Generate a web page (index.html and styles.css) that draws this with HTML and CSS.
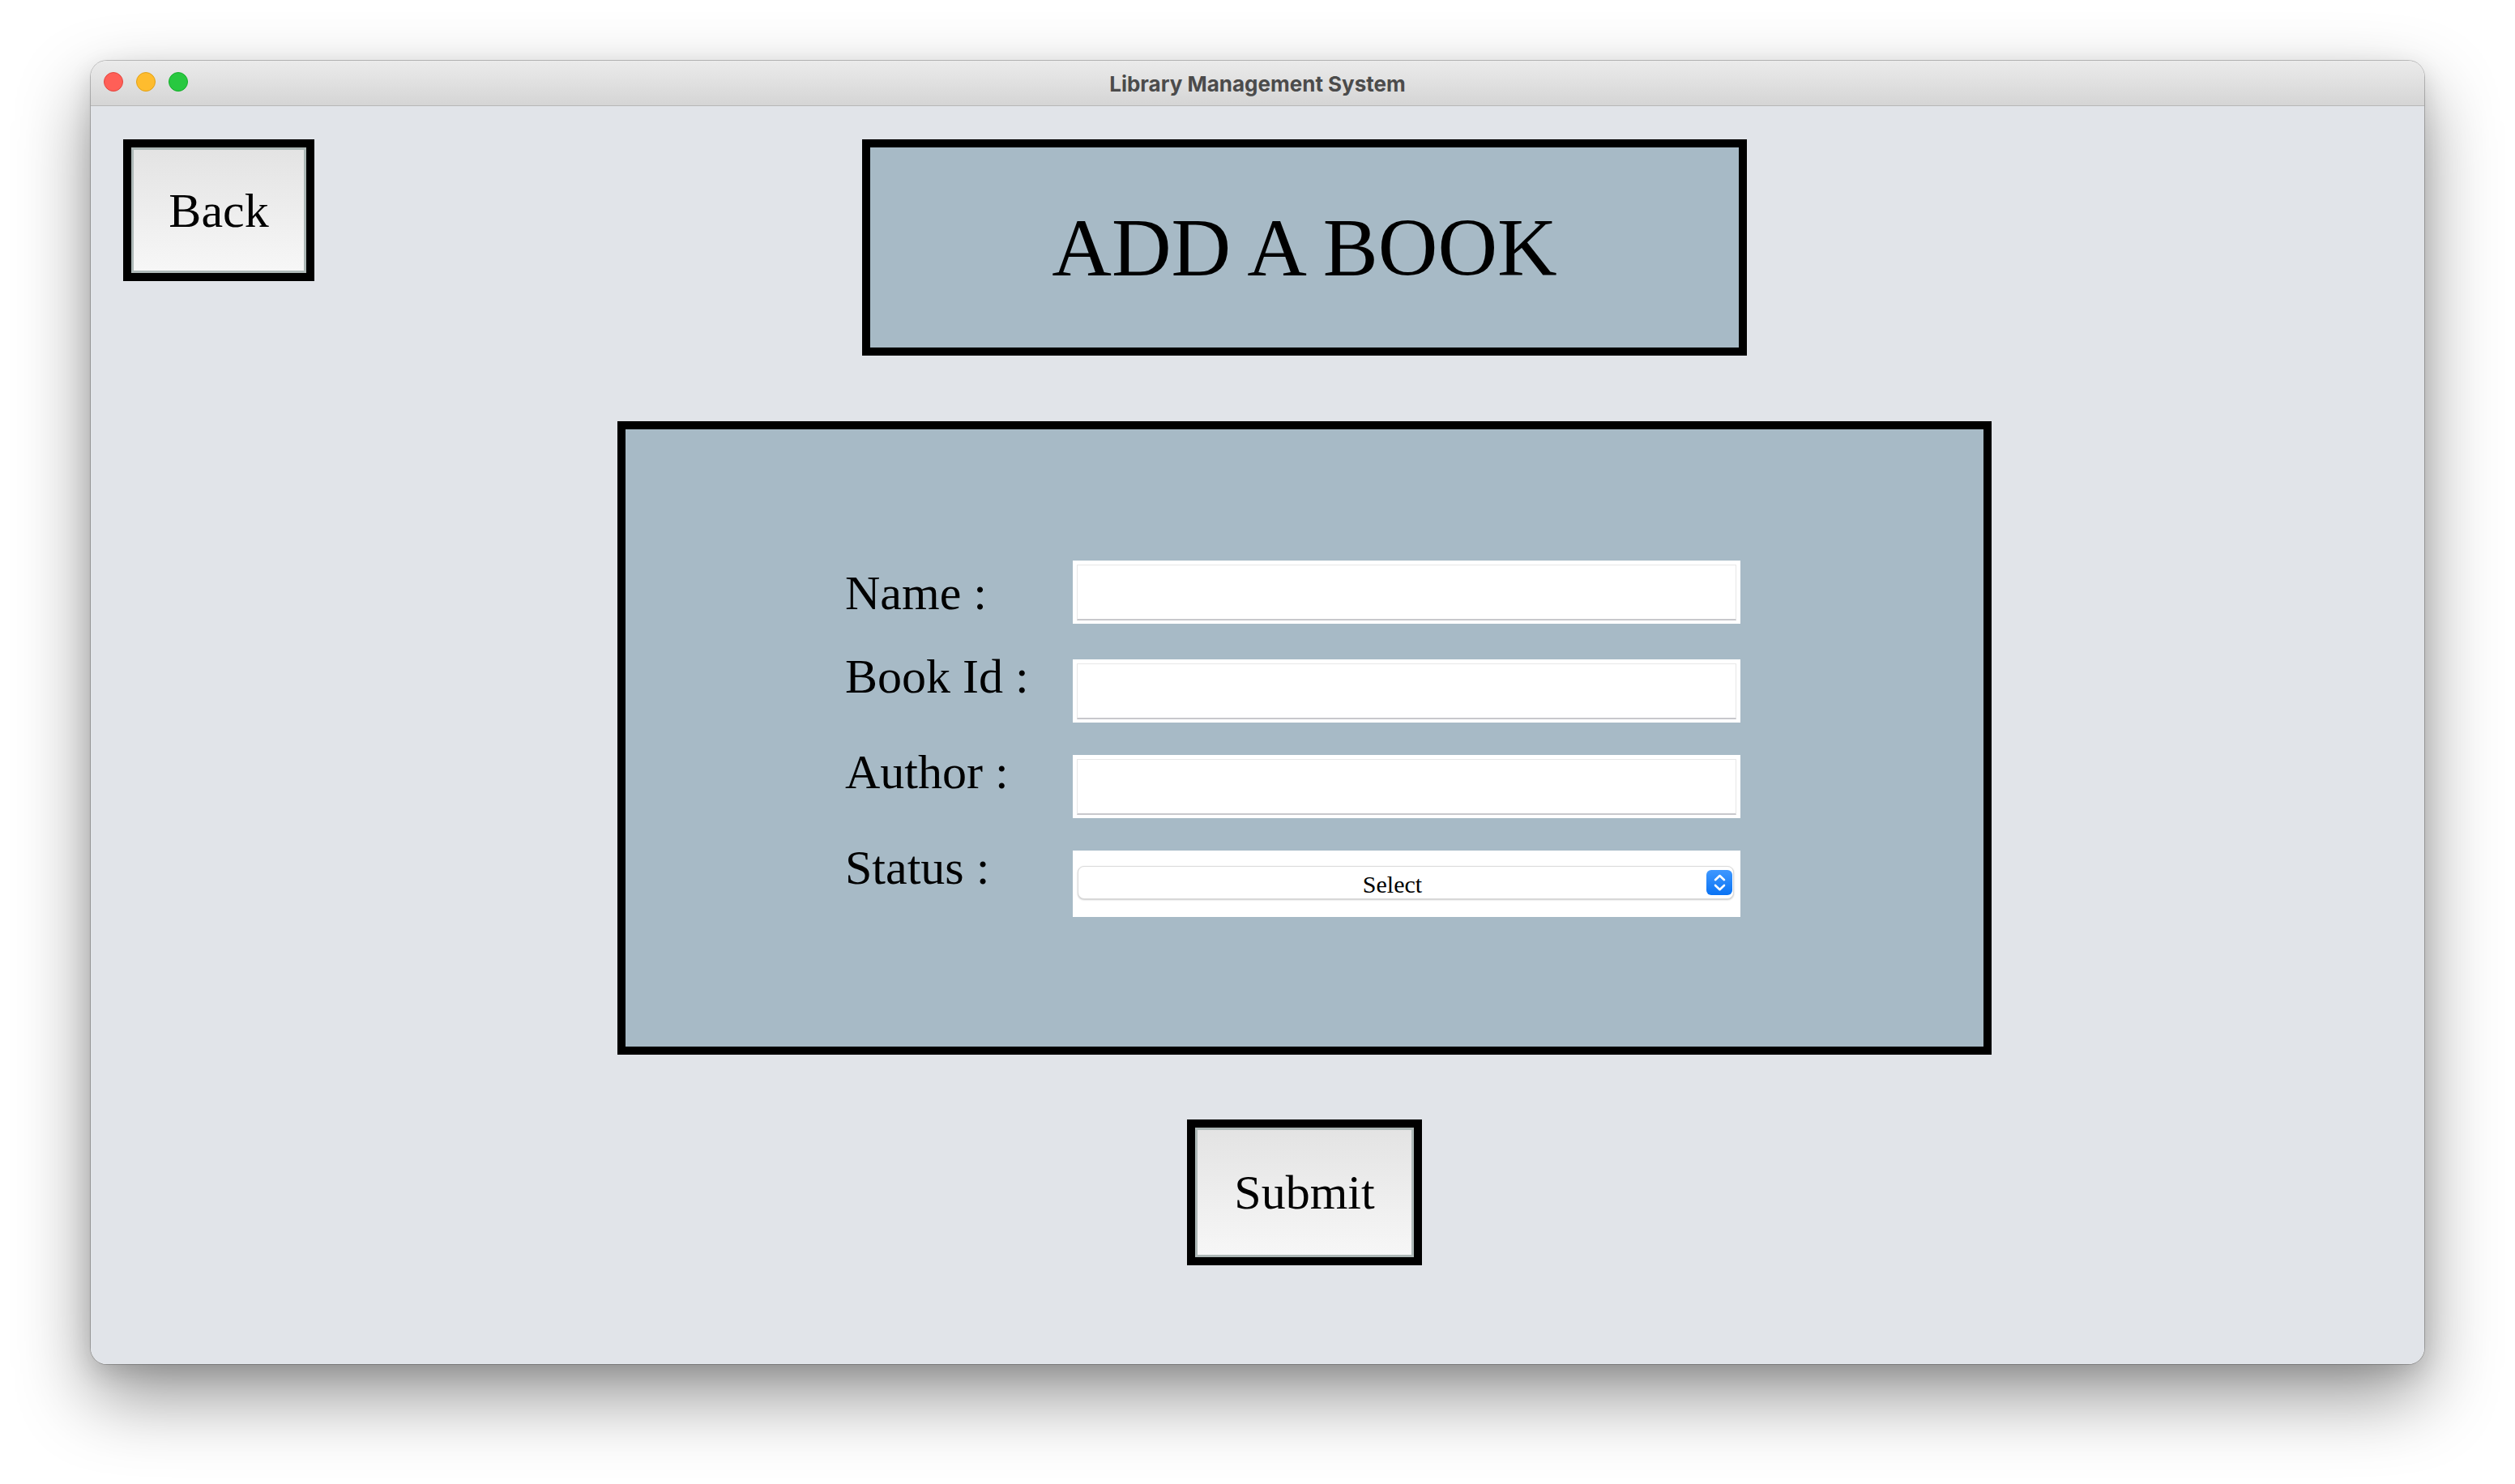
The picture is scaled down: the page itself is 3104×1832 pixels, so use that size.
FILE: index.html
```html
<!DOCTYPE html>
<html lang="en">
<head>
<meta charset="utf-8">
<title>Library Management System</title>
<link rel="stylesheet" href="styles.css">
</head>
<body>
<div class="window">
  <div class="titlebar">
    <div class="lights">
      <span class="light light-red"></span>
      <span class="light light-yellow"></span>
      <span class="light light-green"></span>
    </div>
    <div class="title">Library Management System</div>
    <div class="titlebar-spacer"></div>
  </div>
  <div class="content">
    <div class="top-row">
      <button class="btn btn-back" type="button">Back</button>
      <div class="heading">ADD A BOOK</div>
    </div>
    <div class="main">
      <div class="panel">
        <div class="form">
          <div class="label label-first">Name :</div>
          <div class="field"><div class="field-inner"></div></div>
          <div class="label">Book Id :</div>
          <div class="field"><div class="field-inner"></div></div>
          <div class="label">Author :</div>
          <div class="field"><div class="field-inner"></div></div>
          <div class="label">Status :</div>
          <div class="field field-select">
            <div class="select">
              <span class="select-text">Select</span>
              <span class="select-arrow">
                <svg width="32" height="31" viewBox="0 0 32 31" aria-hidden="true">
                  <path d="M11 12.2 L16.5 7 L22 12.2" />
                  <path d="M11 19 L16.5 24.2 L22 19" />
                </svg>
              </span>
            </div>
          </div>
        </div>
      </div>
      <button class="btn btn-submit" type="button">Submit</button>
    </div>
  </div>
</div>
</body>
</html>
```

FILE: styles.css
```css
html, body {
  margin: 0;
  padding: 0;
}

body {
  width: 3104px;
  height: 1832px;
  background: #ffffff;
  overflow: hidden;
  font-family: "Liberation Serif", "Times New Roman", serif;
}

.window {
  margin: 75px 0 0 112px;
  width: 2880px;
  height: 1609px;
  border-radius: 20px;
  overflow: hidden;
  display: flex;
  flex-direction: column;
  box-shadow: 0 0 0 1px rgba(0, 0, 0, 0.22), 0 40px 90px rgba(0, 0, 0, 0.42), 0 10px 30px rgba(0, 0, 0, 0.12);
}

.titlebar {
  height: 55px;
  flex: none;
  border-bottom: 1px solid #b7b7b7;
  background: linear-gradient(#ebebeb, #d5d5d5);
  display: grid;
  grid-template-columns: 1fr auto 1fr;
  align-items: center;
}

.lights {
  display: flex;
  gap: 16px;
  padding-left: 16px;
  padding-bottom: 4px;
}

.light {
  width: 24px;
  height: 24px;
  border-radius: 50%;
  box-sizing: border-box;
}

.light-red {
  background: #ff5f57;
  border: 1px solid #e2463f;
}

.light-yellow {
  background: #febc2e;
  border: 1px solid #e1a116;
}

.light-green {
  background: #28c840;
  border: 1px solid #14ae2a;
}

.title {
  font-family: "Inter", "Liberation Sans", sans-serif;
  font-weight: 700;
  font-size: 26px;
  color: #4b4b4b;
  padding-top: 1px;
}

.content {
  flex: 1;
  background: #e1e4e9;
}

.top-row {
  display: flex;
  align-items: flex-start;
  padding: 41px 0 0 40px;
}

.btn {
  box-sizing: border-box;
  border: 10px solid #000;
  background: linear-gradient(#e3e3e3, #f7f7f7);
  box-shadow: inset 0 0 0 3px #adb8b7, inset 0 3px 0 0 #c4d6d2;
  font-family: "Liberation Serif", "Times New Roman", serif;
  font-size: 60px;
  color: #000;
  padding: 0;
  margin: 0;
  line-height: 1;
}

.btn-back {
  width: 236px;
  height: 175px;
}

.heading {
  margin-left: 676px;
  width: 1092px;
  height: 267px;
  box-sizing: border-box;
  border: 10px solid #000;
  background: #a7bac6;
  display: flex;
  align-items: center;
  justify-content: center;
  font-size: 102px;
  color: #000;
}

.main {
  display: flex;
  flex-direction: column;
  align-items: center;
  padding-left: 116px;
}

.panel {
  margin-top: 81px;
  width: 1696px;
  height: 782px;
  box-sizing: border-box;
  border: 10px solid #000;
  background: #a7bac6;
  padding: 162px 0 0 271px;
}

.form {
  display: grid;
  grid-template-columns: 281px 824px;
  grid-template-rows: 82px 78px 78px 82px;
  row-gap: 40px;
}

.label {
  font-size: 60px;
  line-height: 60px;
  color: #000;
  margin-top: -9px;
  align-self: start;
  white-space: nowrap;
}

.label-first {
  margin-top: 10px;
}

.field {
  height: 78px;
  box-sizing: border-box;
  background: #fff;
  padding: 5px 5px 4px 5px;
  align-self: start;
}

.field-inner {
  height: 100%;
  box-sizing: border-box;
  border: 1px solid #e7e7e7;
  border-bottom: 2px solid #c8c8cc;
}

.field-select {
  height: 82px;
  padding: 19px 8px 0 6px;
}

.select {
  height: 41px;
  box-sizing: border-box;
  border: 1px solid #dadada;
  border-radius: 8px;
  background: #fff;
  box-shadow: 0 1px 2px rgba(0, 0, 0, 0.22);
  display: flex;
  align-items: center;
  padding-right: 1px;
}

.select-text {
  flex: 1;
  text-align: center;
  font-size: 30px;
  line-height: 30px;
  color: #000;
  padding-top: 4px;
}

.select-arrow {
  width: 32px;
  height: 31px;
  border-radius: 6px;
  background: linear-gradient(#3f98ff, #0a73f4);
  display: flex;
}

.select-arrow path {
  fill: none;
  stroke: #fff;
  stroke-width: 2.6;
  stroke-linecap: round;
  stroke-linejoin: round;
}

.btn-submit {
  margin-top: 80px;
  width: 290px;
  height: 180px;
}
```
